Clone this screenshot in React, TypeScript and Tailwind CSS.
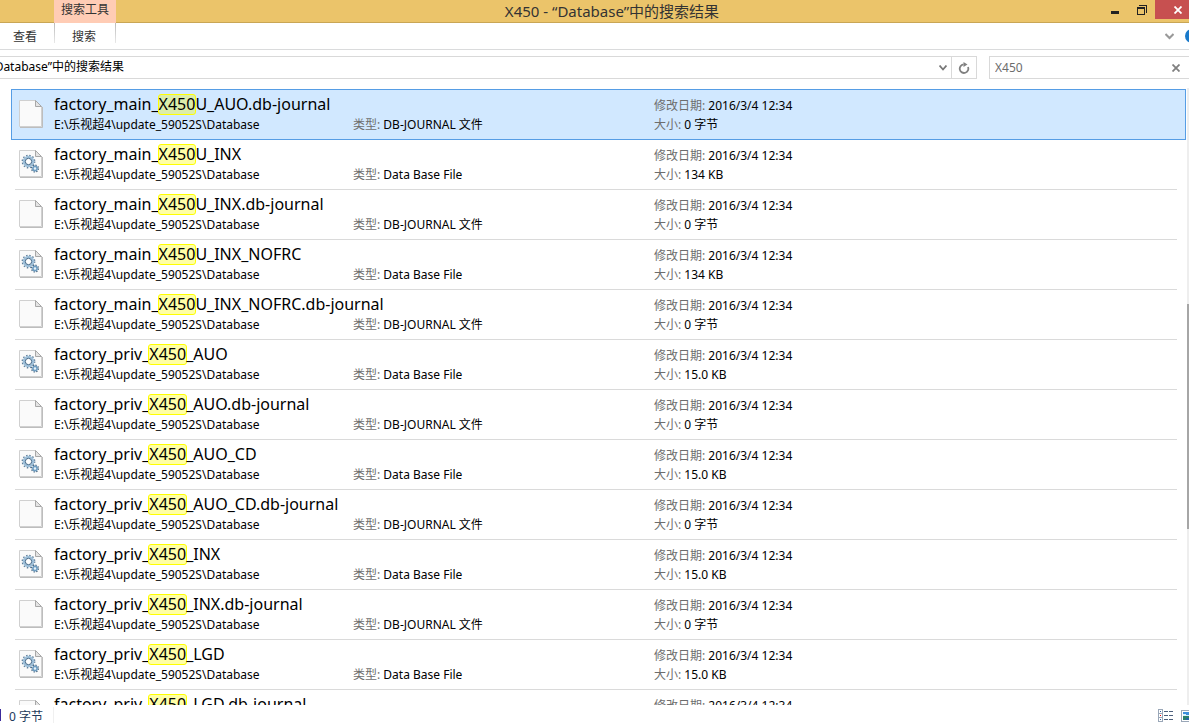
const rows = [
  { pre: "factory_main_", post: "U_AUO.db-journal", journal: true, size: "0 字节" },
  { pre: "factory_main_", post: "U_INX", journal: false, size: "134 KB" },
  { pre: "factory_main_", post: "U_INX.db-journal", journal: true, size: "0 字节" },
  { pre: "factory_main_", post: "U_INX_NOFRC", journal: false, size: "134 KB" },
  { pre: "factory_main_", post: "U_INX_NOFRC.db-journal", journal: true, size: "0 字节" },
  { pre: "factory_priv_", post: "_AUO", journal: false, size: "15.0 KB" },
  { pre: "factory_priv_", post: "_AUO.db-journal", journal: true, size: "0 字节" },
  { pre: "factory_priv_", post: "_AUO_CD", journal: false, size: "15.0 KB" },
  { pre: "factory_priv_", post: "_AUO_CD.db-journal", journal: true, size: "0 字节" },
  { pre: "factory_priv_", post: "_INX", journal: false, size: "15.0 KB" },
  { pre: "factory_priv_", post: "_INX.db-journal", journal: true, size: "0 字节" },
  { pre: "factory_priv_", post: "_LGD", journal: false, size: "15.0 KB" },
  { pre: "factory_priv_", post: "_LGD.db-journal", journal: true, size: "0 字节" },
];

function FileIcon({ gears }: { gears: boolean }) {
  return (
    <svg width="26" height="30" viewBox="0 0 26 30" className="shrink-0" aria-hidden="true">
      <path d="M2 28.5h22.5V8" fill="none" stroke="#bdbdbd" />
      <path d="M1.5 1.5h16l6 6v20h-22z" fill="#fafafa" stroke="#d0d0d0" />
      <path d="M17.5 1.5v6h6z" fill="#e4e4e4" stroke="#a8a8a8" />
      {gears && (
        <g fill="none">
          <circle cx="10.5" cy="12.5" r="6.2" stroke="#5f7f9b" strokeWidth="1.4" strokeDasharray="1.5 1.75" />
          <circle cx="10.5" cy="12.5" r="4.6" stroke="#9dbfd9" strokeWidth="2.4" />
          <circle cx="10.5" cy="12.5" r="3.2" fill="#fff" stroke="#3f6486" strokeWidth="1" />
          <circle cx="17" cy="19.5" r="3.4" stroke="#46647f" strokeWidth="1.4" strokeDasharray="1.3 1.37" />
          <circle cx="17" cy="19.5" r="2.1" fill="#e8f2f9" stroke="#6d9dc2" strokeWidth="1.6" />
        </g>
      )}
    </svg>
  );
}

function Row({ row, selected }: { row: (typeof rows)[number]; selected: boolean }) {
  return (
    <li
      className={`shrink-0 ${
        selected
          ? "-mt-px mr-[3px] ml-[11px] h-[51px] border border-[#569de5] bg-[#d1e8ff] pl-[6px]"
          : "mr-3 ml-[15px] h-[50px] border-b border-[#dadada] pl-[3px]"
      }`}
    >
      <div className="grid h-[49px] grid-cols-[36px_299px_301px_1fr] text-xs leading-5">
        <div className="pt-[9px]">
          <FileIcon gears={!row.journal} />
        </div>
        <div className="pt-1 whitespace-nowrap">
          <div className="h-[21px] text-base leading-5">
            {row.pre}
            <mark className={`-mx-px inline-block rounded-[3px] border border-[#ffff00] leading-[19px] text-black ${selected ? "bg-[#dcedaa]" : "bg-[#ffffa6]"}`}>X450</mark>
            {row.post}
          </div>
          <div>E:\乐视超4\update_59052S\Database</div>
        </div>
        <div className="pt-[25px]">
          <span className="text-[#6d6d6d]">类型:</span> {row.journal ? "DB-JOURNAL 文件" : "Data Base File"}
        </div>
        <div className="pt-[6px]">
          <div className="h-[19px]">
            <span className="text-[#6d6d6d]">修改日期:</span> 2016/3/4 12:34
          </div>
          <div>
            <span className="text-[#6d6d6d]">大小:</span> {row.size}
          </div>
        </div>
      </div>
    </li>
  );
}

export default function App() {
  return (
    <div className="flex h-screen flex-col overflow-hidden bg-white font-['Noto_Sans','Noto_Sans_CJK_SC',sans-serif] text-xs text-black">
      <header className="grid h-[23px] shrink-0 grid-cols-[1fr_auto_1fr] border-b border-[#c9a655] bg-[#ebc46a] text-[#333]">
        <div className="ml-[54px] h-[23px] w-[62px] bg-[#ffccb5] text-center leading-5">搜索工具</div>
        <h1 className="pl-[35px] text-[15px] leading-[22px]">X450 - “Database”中的搜索结果</h1>
        <div className="flex justify-end">
          <button aria-label="最小化" className="flex h-[19px] w-[26px] items-center justify-center">
            <svg width="8" height="10"><path d="M0 6h8v3H0z" fill="#222" /></svg>
          </button>
          <button aria-label="还原" className="flex h-[19px] w-[27px] items-center justify-center">
            <svg width="10" height="10" fill="none" stroke="#222" shapeRendering="crispEdges">
              <path d="M0.5 2.5h7v7h-7zM0 3.5h8M2 0.5h7.5V8" />
            </svg>
          </button>
          <button aria-label="关闭" className="flex h-[19px] w-[34px] items-center bg-[#c75050] pl-[19px]">
            <svg width="8" height="8" stroke="#fff" strokeWidth="1.8"><path d="M0.5 0.5l7 7M7.5 0.5l-7 7" /></svg>
          </button>
        </div>
      </header>

      <nav className="flex h-[27px] shrink-0 border-b border-[#dadbdc] text-[#333]">
        <button className="w-[54px] pr-1 leading-7">查看</button>
        <span className="h-5 w-px bg-linear-to-b from-[#bbb] to-[#e8e8e8]" />
        <button className="w-[60px] pr-[2px] leading-7">搜索</button>
        <span className="h-5 w-px bg-linear-to-b from-[#bbb] to-[#e8e8e8]" />
        <div className="ml-auto flex items-center">
          <button aria-label="展开功能区" className="mr-[11px]">
            <svg width="9" height="7" fill="none" stroke="#999" strokeWidth="2"><path d="M0.5 1l4 4 4-4" /></svg>
          </button>
          <button aria-label="帮助" className="w-1 overflow-hidden">
            <svg width="14" height="14" className="max-w-none"><circle cx="7" cy="7" r="7" fill="#1979ca" /></svg>
          </button>
        </div>
      </nav>

      <div className="flex h-[38px] shrink-0 pt-[6px]">
        <div className="flex h-[23px] flex-1 border border-l-0 border-[#d9d9d9]">
          <div className="flex w-[124px] justify-end overflow-hidden leading-5 whitespace-nowrap">Database”中的搜索结果</div>
          <button aria-label="以前的位置" className="ml-auto flex w-[18px] items-center justify-center border-r border-[#d9d9d9]">
            <svg width="8" height="6" fill="none" stroke="#777" strokeWidth="1.8"><path d="M0.5 0.5l3.5 4 3.5-4" /></svg>
          </button>
          <button aria-label="刷新" className="flex w-6 items-center justify-center">
            <svg width="12" height="12" fill="none" stroke="#808080" strokeWidth="1.8">
              <path d="M5.5 2.4A4.3 4.3 0 1 0 10 5" />
              <path d="M5.5 0v5l4-2.5z" fill="#808080" stroke="none" />
            </svg>
          </button>
        </div>
        <div className="ml-3 flex h-[23px] w-[200px] border border-r-0 border-[#d9d9d9]">
          <input aria-label="搜索" defaultValue="X450" className="min-w-0 flex-1 px-[5px] text-[#6d6d6d] outline-none" />
          <button aria-label="清除" className="mr-[9px]">
            <svg width="8" height="8" stroke="#808080" strokeWidth="1.8"><path d="M0.5 0.5l7 7M7.5 0.5l-7 7" /></svg>
          </button>
        </div>
      </div>

      <main className="flex min-h-0 flex-1">
        <ul className="flex min-w-0 flex-1 flex-col overflow-hidden pt-[2px]">
          {rows.map((row, i) => (
            <Row key={i} row={row} selected={i === 0} />
          ))}
        </ul>
        <div className="-ml-[2px] w-[2px] shrink-0 bg-[#eee]">
          <div className="mt-[216px] h-[225px] bg-[#a6a6a6]" />
        </div>
      </main>

      <footer className="flex h-[19px] shrink-0 items-center text-[#1e395b]">
        <span className="h-3 w-px bg-[#3b2a9c]" />
        <span className="ml-2 h-[19px] leading-6">0 字节</span>
        <span className="ml-[10px] h-4 w-px bg-[#f0f0f0]" />
        <div className="ml-auto flex h-[19px] items-start pt-1">
          <button aria-label="详细信息" className="mr-2">
            <svg width="15" height="13" fill="none" shapeRendering="crispEdges">
              <path d="M0.5 0.5h4v4h-4zM0.5 4.5h4v4h-4zM0.5 8.5h4v4h-4z" stroke="#9aa7b8" />
              <path d="M6 2.5h4M11 2.5h4M6 6.5h4M11 6.5h4M6 10.5h4M11 10.5h4" stroke="#4d5f7c" />
              <path d="M2 2h1v1H2zM2 10h1v1H2z" fill="#2c5d9c" />
              <path d="M2 6h1v1H2z" fill="#e00" />
            </svg>
          </button>
          <button aria-label="大缩略图" className="w-2 overflow-hidden">
            <svg width="15" height="13" className="max-w-none" shapeRendering="crispEdges">
              <path d="M0.5 1.5h14v11H.5z" fill="#fff" stroke="#9aa7b8" />
              <path d="M2 3h11v4H2z" fill="#3c8fdc" />
              <path d="M2 5h3v1h3v1H2z" fill="#d9effb" />
              <path d="M2 7h11v4H2z" fill="#2b7f6c" />
              <path d="M5 9h8v2H5z" fill="#2463a6" />
            </svg>
          </button>
        </div>
      </footer>
    </div>
  );
}
